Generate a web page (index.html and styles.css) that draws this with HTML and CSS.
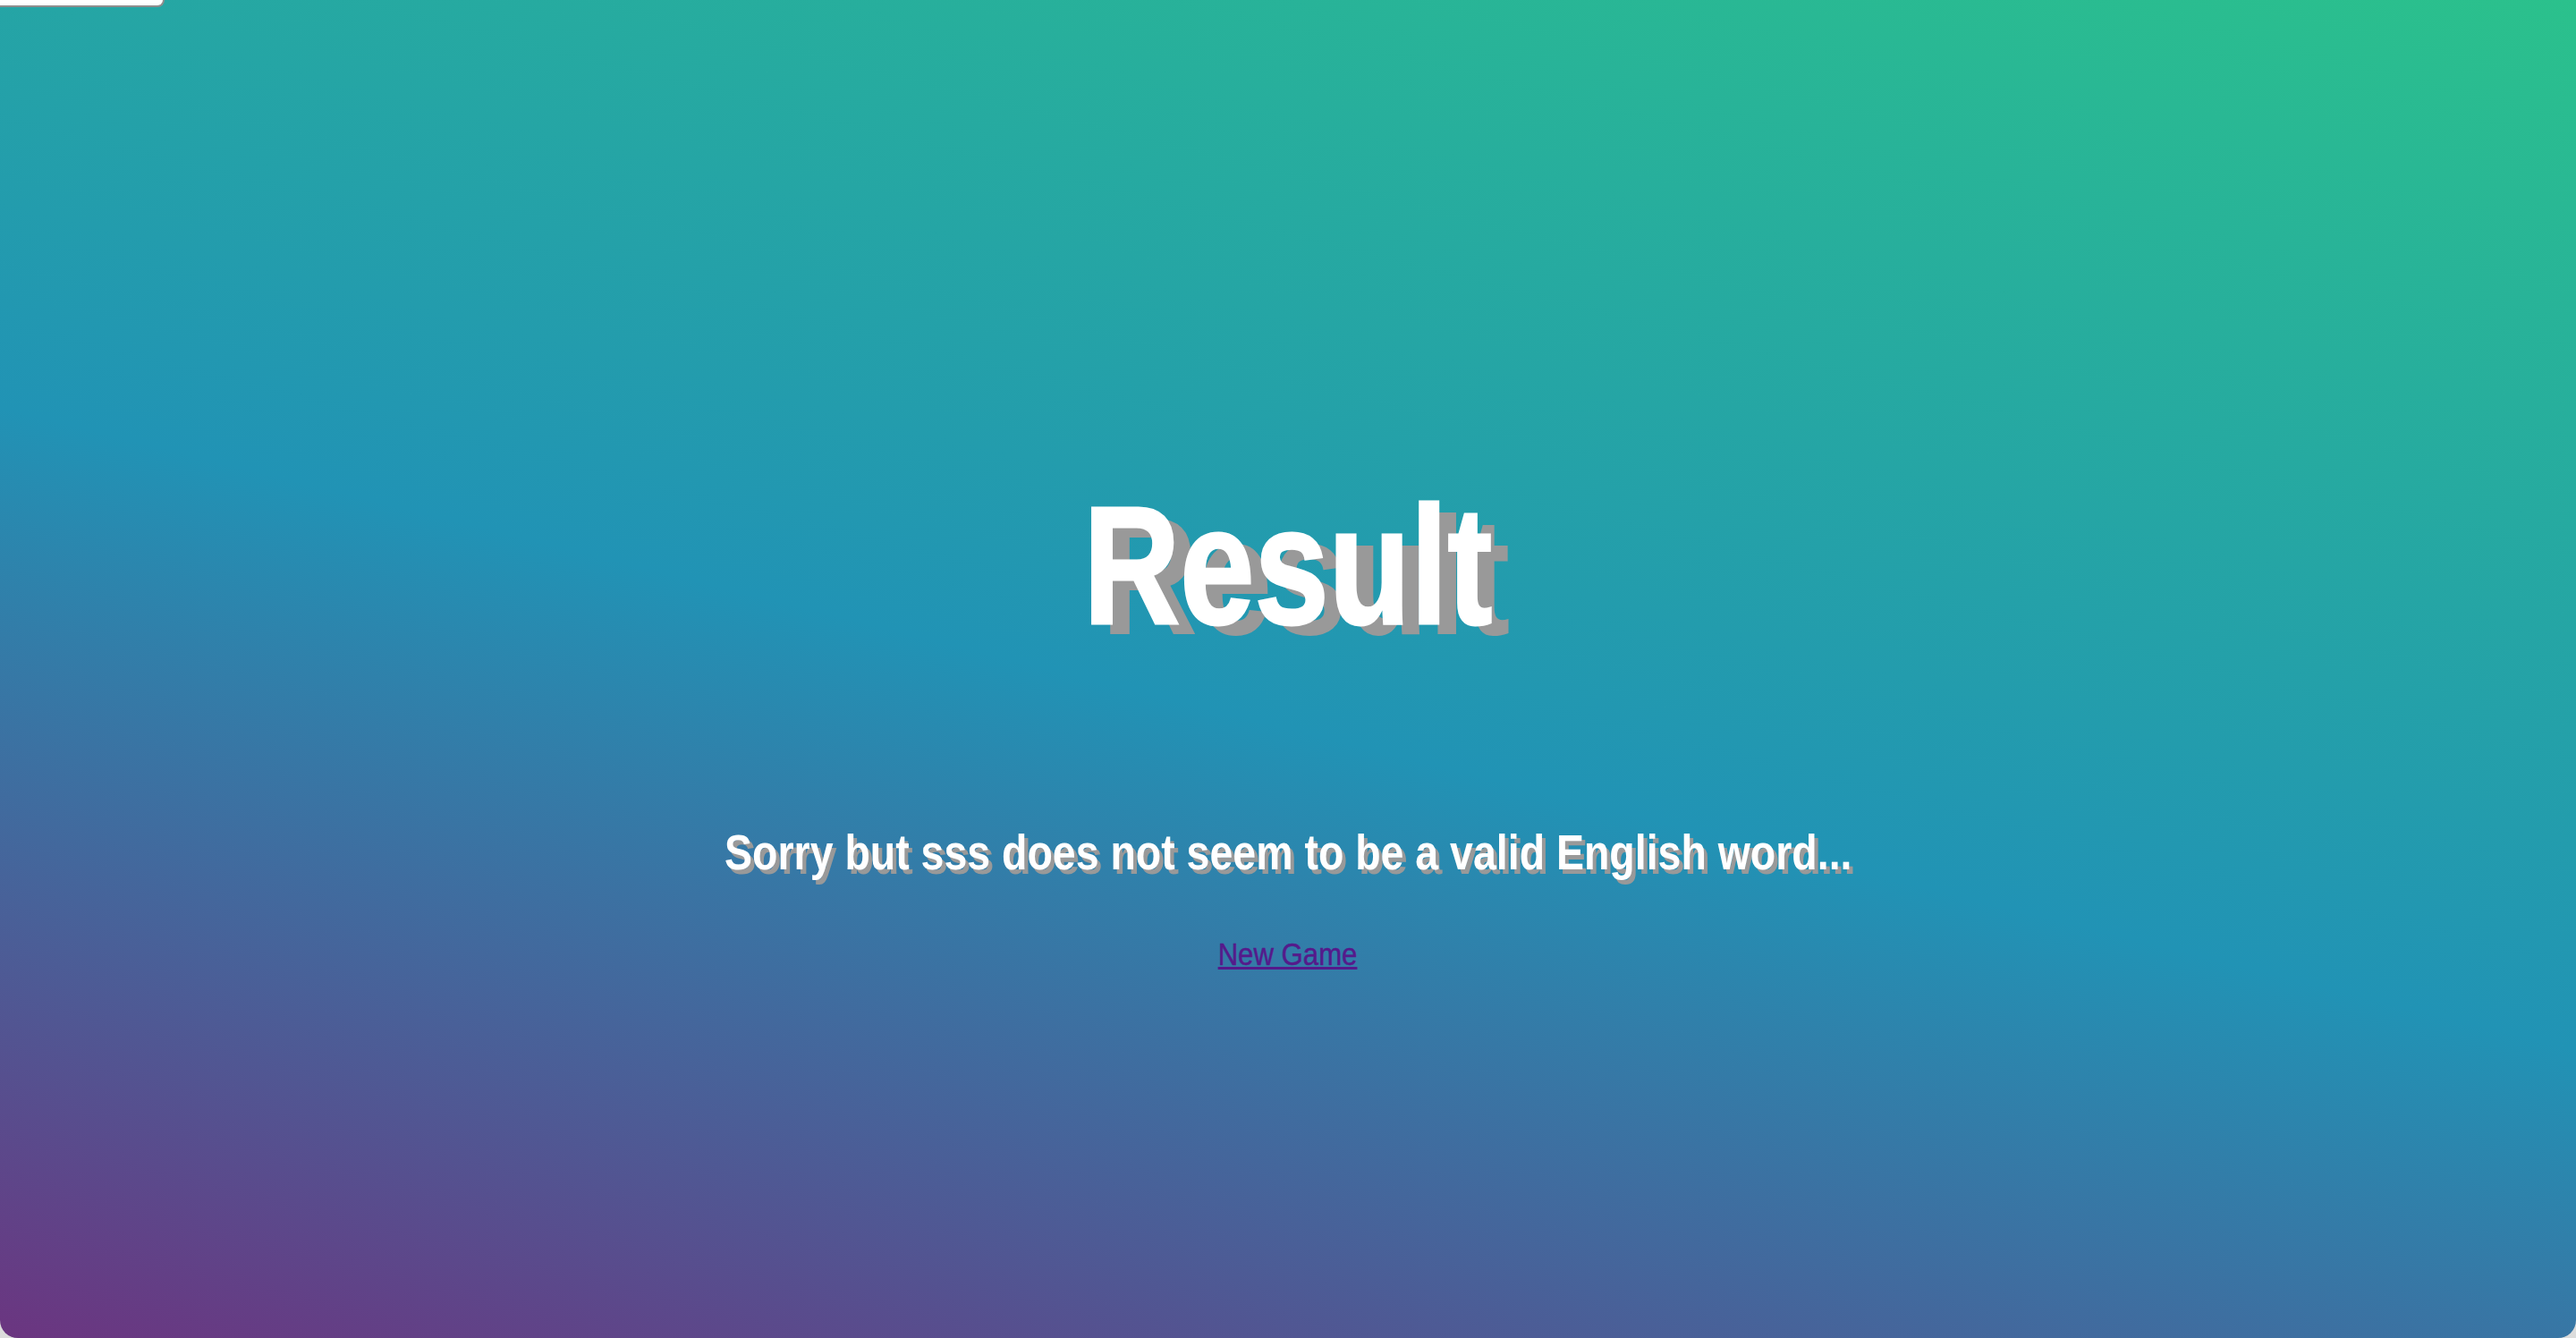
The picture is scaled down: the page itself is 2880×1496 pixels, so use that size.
FILE: index.html
```html
<!DOCTYPE html>
<html lang="en">
<head>
<meta charset="utf-8">
<title>Result</title>
<link rel="stylesheet" href="styles.css">
</head>
<body>
<div class="window">
  <div class="tab"></div>
  <main class="result">
    <h1 class="result-title">Result</h1>
    <p class="result-message">Sorry but sss does not seem to be a valid English word...</p>
    <a class="new-game" href="#">New Game</a>
  </main>
</div>
</body>
</html>
```

FILE: styles.css
```css
html, body {
  margin: 0;
  padding: 0;
  height: 100%;
  background: #dcdcdc;
}

body {
  font-family: "Liberation Sans", Arial, sans-serif;
  overflow: hidden;
}

.window {
  position: relative;
  height: 1496px;
  border-radius: 0 0 20px 20px;
  overflow: hidden;
  background: linear-gradient(14deg, #6b3580 0%, #2193b5 47%, #2bc18c 100%);
}

.tab {
  position: absolute;
  top: 0;
  left: 0;
  width: 182px;
  height: 6px;
  background: #ffffff;
  border-right: 2px solid #8e8e8e;
  border-bottom: 2px solid #8e8e8e;
  border-bottom-right-radius: 10px;
}

.result {
  display: flex;
  flex-direction: column;
  align-items: center;
  padding-top: 539px;
}

.result-title {
  margin: 0;
  font-size: 187px;
  line-height: 1;
  font-weight: 700;
  color: #ffffff;
  -webkit-text-stroke: 3px #ffffff;
  transform: scaleX(0.8);
  text-shadow: 25px 12px 0 #999999;
}

.result-message {
  margin: 199px 0 0;
  font-size: 56px;
  line-height: 1;
  font-weight: 700;
  color: #ffffff;
  transform: scaleX(0.83);
  text-shadow: 5px 5px 0 #999999;
}

.new-game {
  margin-top: 68px;
  font-size: 35px;
  line-height: 1;
  color: #551a8b;
  text-decoration: underline;
  -webkit-text-stroke: 0.5px #551a8b;
  transform: scaleX(0.89);
}
```
